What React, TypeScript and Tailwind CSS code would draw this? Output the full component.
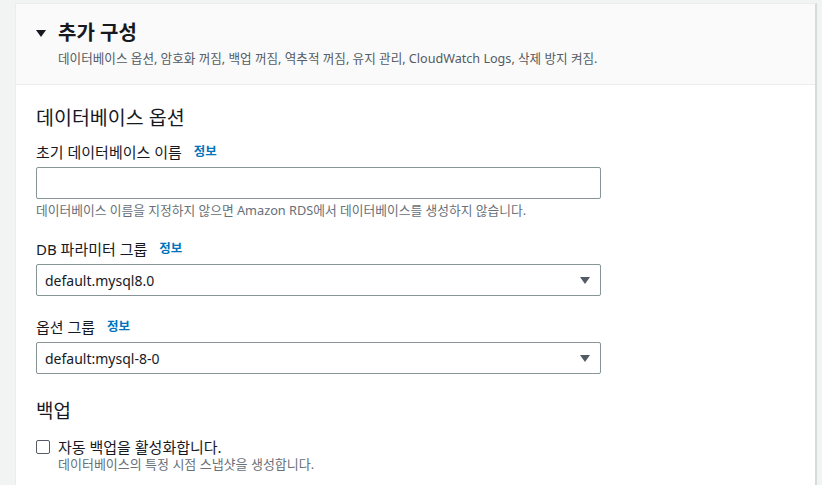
import React from 'react';

const font = { fontFamily: '"Noto Sans", "Noto Sans CJK KR", sans-serif' };

function Caret({ className = '' }: { className?: string }) {
  return (
    <svg width="10" height="7" viewBox="0 0 10 7" className={className}>
      <path d="M0 0 H10 L5 7 Z" fill="currentColor" />
    </svg>
  );
}

function FieldLabel({ text }: { text: string }) {
  return (
    <div className="flex items-center h-[22px] text-[15px] text-[#16191f]">
      <span>{text}</span>
      <a className="ml-[12px] text-[12.5px] font-bold text-[#0073bb]">정보</a>
    </div>
  );
}

function SelectBox({ value }: { value: string }) {
  return (
    <div className="flex h-[32px] w-[565px] items-center justify-between rounded-[2px] border border-[#879596] bg-white pl-[8px] pr-[10px] text-[14px] text-[#16191f]">
      <span>{value}</span>
      <Caret className="text-[#545b64]" />
    </div>
  );
}

export default function App() {
  return (
    <div className="h-[485px] overflow-hidden bg-[#f2f3f3] pl-[15px] pr-[5px] pt-[3px]" style={font}>
      <div className="h-full border-l border-t border-r-2 border-l-[#eaeded] border-t-[#eaeded] border-r-[#d5dbdb] bg-white">
        <div className="h-[81px] border-b border-[#eaeded] bg-[#fafafa] pl-[20px] pt-[15px]">
          <div className="flex items-center h-[28px]">
            <Caret className="mr-[12px] h-[7px] w-[10px] text-[#16191f]" />
            <span className="text-[20px] font-bold text-[#16191f]">추가 구성</span>
          </div>
          <div className="ml-[22px] mt-[4px] text-[12.6px] leading-[16px] text-[#545b64]">
            데이터베이스 옵션, 암호화 꺼짐, 백업 꺼짐, 역추적 꺼짐, 유지 관리, CloudWatch Logs, 삭제 방지 켜짐.
          </div>
        </div>

        <div className="pl-[20px] pt-[21px]">
          <h2 className="text-[19.5px] leading-[24px] text-[#16191f]">데이터베이스 옵션</h2>

          <div className="mt-[11px]">
            <FieldLabel text="초기 데이터베이스 이름" />
            <div className="mt-[4px] h-[32px] w-[565px] rounded-[2px] border border-[#879596] bg-white" />
            <div className="mt-[3px] text-[12.75px] leading-[16px] text-[#687078]">
              데이터베이스 이름을 지정하지 않으면 Amazon RDS에서 데이터베이스를 생성하지 않습니다.
            </div>
          </div>

          <div className="mt-[20px]">
            <FieldLabel text="DB 파라미터 그룹" />
            <div className="mt-[4px]">
              <SelectBox value="default.mysql8.0" />
            </div>
          </div>

          <div className="mt-[20px]">
            <FieldLabel text="옵션 그룹" />
            <div className="mt-[4px]">
              <SelectBox value="default:mysql-8-0" />
            </div>
          </div>

          <h2 className="mt-[25px] text-[19px] leading-[24px] text-[#16191f]">백업</h2>

          <div className="mt-[15px] flex">
            <div className="mt-[2px] h-[14px] w-[14px] rounded-[2px] border border-[#545b64] bg-white" />
            <div className="ml-[8px]">
              <div className="text-[15px] leading-[18px] text-[#16191f]">자동 백업을 활성화합니다.</div>
              <div className="text-[13px] leading-[16px] text-[#687078]">데이터베이스의 특정 시점 스냅샷을 생성합니다.</div>
            </div>
          </div>
        </div>
      </div>
    </div>
  );
}
